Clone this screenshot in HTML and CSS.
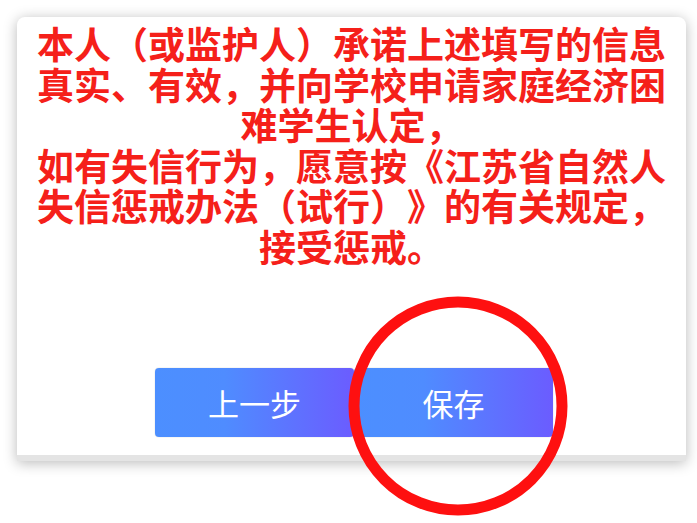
FILE: index.html
```html
<!DOCTYPE html>
<html lang="zh-CN">
<head>
    <meta charset="UTF-8">
    <meta name="viewport" content="width=device-width, initial-scale=1.0">
    <title>承诺</title>
    <link rel="stylesheet" href="styles.css">
</head>
<body>
    <div class="card">
        <p class="promise">
            本人（或监护人）承诺上述填写的信息真实、有效，并向学校申请家庭经济困难学生认定，<br>
            如有失信行为，愿意按《江苏省自然人失信惩戒办法（试行）》的有关规定，接受惩戒。
        </p>

        <div class="actions">
            <button type="button" class="btn">上一步</button>
            <button type="button" class="btn">保存</button>
        </div>
    </div>

    <!-- red mark drawn over the save button -->
    <svg class="mark" width="240" height="240" viewBox="0 0 240 240">
        <ellipse cx="120" cy="120" rx="104" ry="104" fill="none" stroke="#fe1010" stroke-width="11"/>
    </svg>
</body>
</html>
```

FILE: styles.css
```css
body {
    margin: 0;
    background: #fff;
    font-family: "Noto Sans CJK SC", "Noto Sans", sans-serif;
    position: relative;
    height: 523px;
    overflow: hidden;
}

.card {
    margin: 17px 0 0 17px;
    width: 669px;
    height: 432px;
    background: #fff;
    border-radius: 8px 8px 0 0;
    border-bottom: 6px solid #e4e4e4;
    box-shadow: 0 2px 14px rgba(0, 0, 0, 0.28);
    padding-top: 6px;
    box-sizing: content-box;
    display: flex;
    flex-direction: column;
    align-items: center;
}

.promise {
    margin: 0;
    width: 632px;
    text-align: center;
    color: #f5201a;
    font-size: 37px;
    font-weight: bold;
    line-height: 40.6px;
    text-spacing-trim: space-all;
}

.actions {
    display: flex;
    margin-top: auto;
    margin-bottom: 18px;
    margin-left: 5px;
}

.btn {
    width: 199px;
    height: 69px;
    border: none;
    border-radius: 4px;
    background: linear-gradient(90deg, #4c8fff 0%, #4f8cff 35%, #6b5cff 100%);
    color: #fff;
    font-family: inherit;
    font-size: 31px;
    box-shadow: 0 0 1px rgba(0, 0, 0, 0.35);
}

.mark {
    position: absolute;
    left: 338px;
    top: 286px;
}
```
